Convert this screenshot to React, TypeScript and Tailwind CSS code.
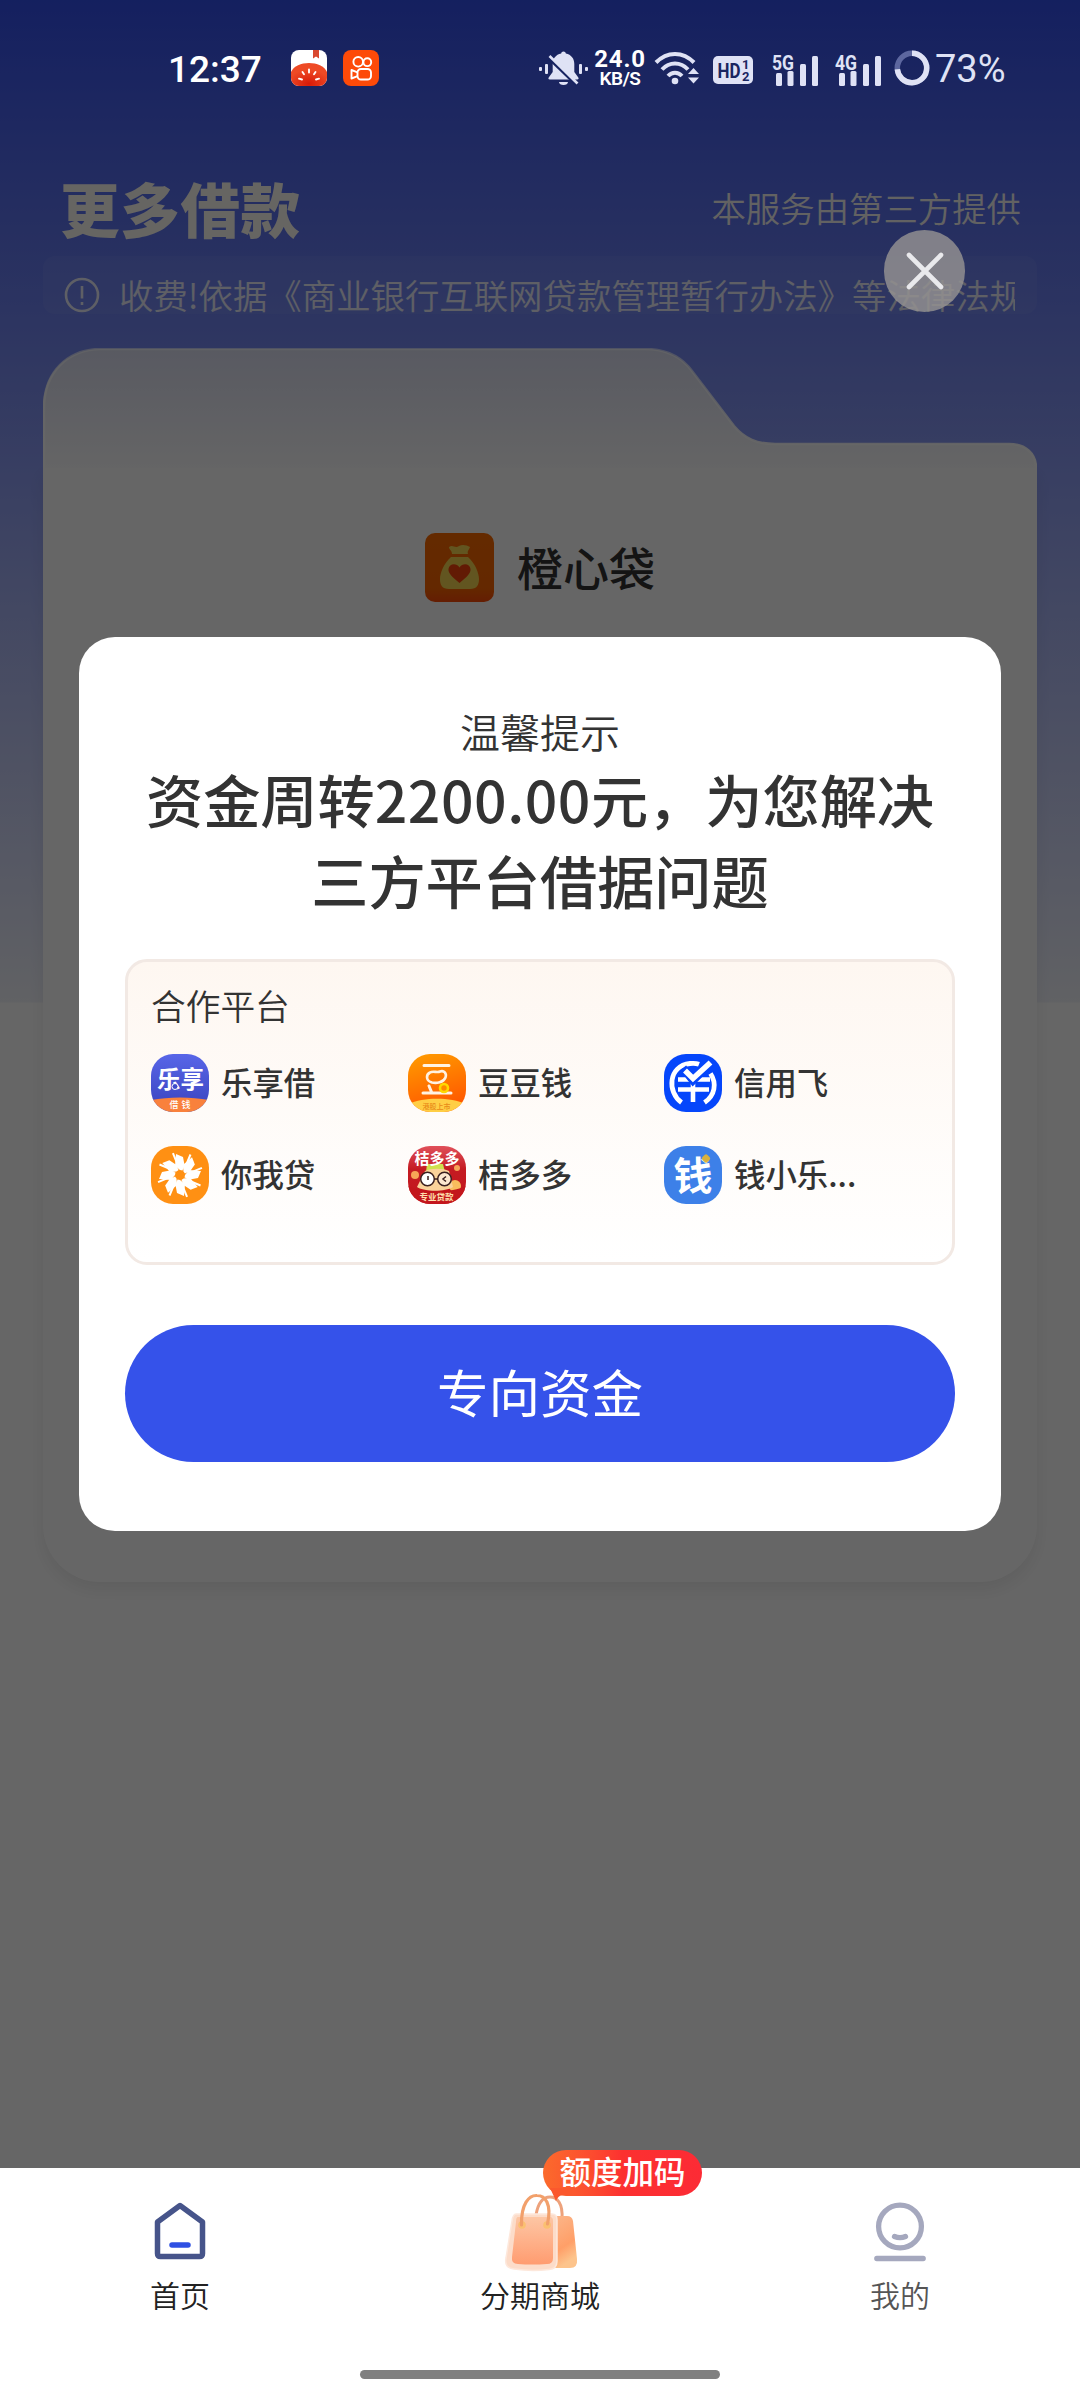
import { ReactNode } from "react";

const cjk = "font-['Noto_Sans_CJK_SC',sans-serif]";

const StatusBar = () => {
  return (
    <div className="relative z-20 h-[138px] shrink-0 pt-[46px] text-[#dfe2f5]">
      <div className="flex h-[44px] items-center">
        <span className="ml-[168px] w-[96px] pt-[3px] whitespace-nowrap font-['Roboto',sans-serif] text-[37px] leading-[44px] font-medium text-white">
          12:37
        </span>
        <svg className="ml-[27px] h-[36px] w-[36px]" viewBox="0 0 36 36">
          <defs>
            <clipPath id="book">
              <rect width="36" height="36" rx="8" />
            </clipPath>
            <radialGradient id="tomato" cx="50%" cy="90%" r="60%">
              <stop offset="0" stopColor="#d81a08" />
              <stop offset="1" stopColor="#ee4a25" />
            </radialGradient>
          </defs>
          <g clipPath="url(#book)">
            <rect width="36" height="36" fill="#fff" />
            <path d="M22 0h6v8.500l-3-2-3 2z" fill="#d9482f" />
            <path d="M0 22C5 10 31 10 36 22v14H0z" fill="url(#tomato)" />
            <path
              d="M18 19.500v3M11.500 22l1.500 2.200M24.500 22l-1.500 2.200M8 28.700l3 .8M28 28.700l-3 .8"
              stroke="#fff"
              strokeWidth="1.900"
              strokeLinecap="round"
            />
          </g>
        </svg>
        <svg
          className="ml-[16px] h-[36px] w-[36px]"
          viewBox="0 0 36 36"
          fill="none"
          stroke="#fff"
          strokeWidth="1.900"
        >
          <rect width="36" height="36" rx="8" fill="#fd4a08" stroke="none" />
          <circle cx="15.200" cy="11.800" r="4.800" />
          <circle cx="24.300" cy="12.200" r="3.900" />
          <rect x="14.500" y="19" width="13.500" height="10.500" rx="3.500" />
          <path d="M14.500 22.300l-6-2.300v8.500l6-2.300" strokeLinejoin="round" />
        </svg>

        <svg className="mt-[2px] ml-[160px] h-[36px] w-[50px]" viewBox="0 0 50 36" fill="currentColor">
          <rect x="0" y="16" width="3" height="4" rx="1" />
          <rect x="6" y="13" width="3" height="10" rx="1" />
          <rect x="40" y="13" width="3" height="10" rx="1" />
          <rect x="46" y="16" width="3" height="4" rx="1" />
          <path d="M24.500 0.500c1.500 0 2.300 1 2.300 2 5.500 1.200 8.500 5 8.500 10.500v8l4 5.500c.6 1 .2 2-1 2H10.700c-1.200 0-1.600-1-1-2l4-5.500v-8c0-5.500 3-9.300 8.500-10.500 0-1 .8-2 2.300-2z" />
          <path d="M20 31h9c0 1.700-2 3-4.500 3S20 32.700 20 31z" />
          <path d="M10 7.500l28 27" stroke="#172360" strokeWidth="3" />
          <path d="M10.500 5L38.500 32.500" stroke="currentColor" strokeWidth="2.600" />
        </svg>
        <div className="ml-[5px] flex w-[52px] flex-col items-center whitespace-nowrap font-['Roboto',sans-serif] text-white">
          <span className="text-[24px] leading-[22px] font-bold tracking-[0.800px]">24.0</span>
          <span className="text-[19px] leading-[18px] font-semibold tracking-[-0.500px]">KB/S</span>
        </div>
        <svg className="ml-[8px] h-[36px] w-[48px]" viewBox="0 0 48 36" fill="none">
          <g stroke="currentColor" strokeWidth="4">
            <path d="M2 12.500c11-11.500 27-11.500 38 0" />
            <path d="M8 19.500c7.500-8 18.500-8 26 0" />
            <path d="M14 26c4-4.300 10-4.300 14 0" />
          </g>
          <circle cx="21" cy="31" r="3.300" fill="currentColor" />
          <path d="M34 24l5.500-6 5.500 6zM34 27.500l5.500 6 5.500-6z" fill="currentColor" />
        </svg>
        <svg className="mt-[4px] ml-[11px] h-[28px] w-[40px]" viewBox="0 0 40 28" fontFamily="Roboto" fontWeight="700">
          <rect width="40" height="28" rx="5" fill="currentColor" />
          <g fill="#1a2560">
            <text x="4.500" y="21.500" fontSize="21" textLength="23" lengthAdjust="spacingAndGlyphs">
              HD
            </text>
            <text x="29" y="13" fontSize="13">
              1
            </text>
            <text x="29" y="25" fontSize="13">
              2
            </text>
          </g>
        </svg>
        <Signal name="5G" className="ml-[19px]" />
        <Signal name="4G" className="ml-[15px]" />
        <svg className="ml-[11px] h-[36px] w-[36px]" viewBox="0 0 36 36" fill="none" strokeWidth="5.500">
          <circle cx="18" cy="18" r="14.700" stroke="#5d679f" />
          <circle
            cx="18"
            cy="18"
            r="14.700"
            stroke="currentColor"
            strokeDasharray="67.400 92.400"
            transform="rotate(-90 18 18)"
          />
        </svg>
        <span className="ml-[5px] pt-[2px] whitespace-nowrap font-['Roboto',sans-serif] text-[38px] leading-[44px]">
          73%
        </span>
      </div>
    </div>
  );
};

const Signal = ({ name, className }: { name: string; className: string }) => (
  <svg className={`h-[42px] w-[48px] ${className}`} viewBox="0 -6 48 42" fill="currentColor">
    <text x="0" y="16.500" fontFamily="Roboto" fontWeight="700" fontSize="20" textLength="22" lengthAdjust="spacingAndGlyphs">
      {name}
    </text>
    <rect x="4" y="20" width="6" height="13" rx="1.500" />
    <rect x="15.500" y="18" width="6" height="15" rx="1.500" />
    <rect x="28" y="11" width="6" height="22" rx="1.500" />
    <rect x="40" y="3" width="6" height="30" rx="1.500" />
  </svg>
);

const FolderCard = () => {
  return (
    <div className="mx-[43px] mt-[34px]">
      <svg className="relative z-[1] block h-[120px] w-[994px]" viewBox="0 0 994 120">
        <defs>
          <linearGradient id="folder" x1="0" y1="0" x2="0" y2="1">
            <stop offset="0" stopColor="#dde0f3" />
            <stop offset="1" stopColor="#fdfdfe" />
          </linearGradient>
          <linearGradient id="edge" x1="0" y1="0" x2="0" y2="1">
            <stop offset="0" stopColor="#fff" stopOpacity="0.6" />
            <stop offset="1" stopColor="#fff" />
          </linearGradient>
        </defs>
        <path
          d="M0 120V60C0 24 25 1 58 1H602C622 1 638 8 649 23L691 78C702 91 714 96 732 96H966C983 96 994 106 994 123V120z"
          fill="url(#folder)"
        />
        <path
          d="M1 120V60C1 24 25 1 58 1H602C622 1 638 8 649 23L691 78C702 91 714 96 732 96H966C983 96 993 106 993 120"
          fill="none"
          stroke="url(#edge)"
          strokeWidth="2.500"
        />
      </svg>
      <div className="h-[1114px] rounded-b-[57px] bg-white pt-[65px] shadow-[0_8px_16px_rgba(0,0,0,0.07)]">
        <div className="flex h-[69px] items-center justify-center">
          <svg className="h-[69px] w-[69px]" viewBox="0 0 69 69">
            <defs>
              <linearGradient id="bagbg" x1="0" y1="0" x2="0" y2="1">
                <stop offset="0" stopColor="#fb6a00" />
                <stop offset="0.8" stopColor="#fb6400" />
                <stop offset="1" stopColor="#fb4a08" />
              </linearGradient>
            </defs>
            <rect width="69" height="69" rx="10" fill="url(#bagbg)" />
            <path
              d="M24 14c4-3 6 2 10-1 3-2 8-1 11 1-1 3-3 4-2 7H27c0-4-3-4-3-7zM26 24h17c7 6 11 16 11 22 0 6-2 10-9 10H24c-7 0-9-4-9-10 0-6 4-16 11-22z"
              fill="#f4d450"
            />
            <path
              d="M34.500 50C27 44 23 40 23.500 36c.5-5.500 8-6.500 11-1.500 3-5 10.500-4 11 1.500.5 4-3.500 8-11 14z"
              fill="#f5420a"
            />
          </svg>
          <span className="ml-[23px] pb-[4px] text-[46px] leading-[60px] font-medium text-[#333]">橙心袋</span>
        </div>
        <div className="mt-[32px] h-px bg-white" />
      </div>
    </div>
  );
};

const AppIcon = ({ id, children }: { id: string; children: ReactNode }) => (
  <svg className="h-[58px] w-[58px] shrink-0" viewBox="0 0 58 58">
    <defs>
      <clipPath id={id}>
        <rect width="58" height="58" rx="22" />
      </clipPath>
      <linearGradient id="lx" x1="0" y1="0" x2="0" y2="1">
        <stop offset="0" stopColor="#5866e8" />
        <stop offset="1" stopColor="#3942bd" />
      </linearGradient>
      <linearGradient id="dd" x1="0" y1="0" x2="0.3" y2="1">
        <stop offset="0" stopColor="#ff9d00" />
        <stop offset="1" stopColor="#ff5a00" />
      </linearGradient>
      <linearGradient id="jd" x1="0" y1="0" x2="0" y2="1">
        <stop offset="0" stopColor="#e0505a" />
        <stop offset="0.4" stopColor="#c41b22" />
        <stop offset="1" stopColor="#c3161c" />
      </linearGradient>
    </defs>
    <g clipPath={`url(#${id})`}>{children}</g>
  </svg>
);

const LogoText = (props: {
  x: number;
  y: number;
  size: number;
  fill: string;
  weight?: number;
  width?: number;
  children: string;
}) => (
  <text
    x={props.x}
    y={props.y}
    fontSize={props.size}
    fill={props.fill}
    fontWeight={props.weight || 700}
    fontFamily="Noto Sans CJK SC"
    textAnchor="middle"
    textLength={props.width}
  >
    {props.children}
  </text>
);

const platforms = [
  {
    name: "乐享借",
    icon: (
      <AppIcon id="c1">
        <rect width="58" height="58" fill="url(#lx)" />
        <path d="M0 46c18-3.500 40-3.500 58 0v12H0z" fill="#f9813c" />
        <LogoText x={29.500} y={34} size={23.500} fill="#fff">
          乐享
        </LogoText>
        <circle cx="24" cy="32.500" r="3" fill="#3f4bcb" stroke="#fff" strokeWidth="1" />
        <LogoText x={29} y={54} size={9} fill="#fff" weight={500} width={21}>
          借钱
        </LogoText>
      </AppIcon>
    ),
  },
  {
    name: "豆豆钱",
    icon: (
      <AppIcon id="c2">
        <rect width="58" height="58" fill="url(#dd)" />
        <path d="M0 50c16-7 42-7 58 0v8H0z" fill="#ffce45" />
        <path
          d="M16 11.500h25M15 39h28M21 32l2.500 6"
          stroke="#fff2e2"
          strokeWidth="3"
          strokeLinecap="round"
        />
        <path
          d="M22 18.500c3-2 7 .5 10-1 4-1.500 7 2 5.500 6-2 5-9 6-13.500 5-6-1.500-6.500-7.500-2-10z"
          fill="none"
          stroke="#fff2e2"
          strokeWidth="2.600"
        />
        <circle cx="36" cy="34" r="4" fill="#ff8a00" stroke="#ffd800" strokeWidth="2.600" />
        <LogoText x={28.500} y={54.500} size={7} fill="#e98a18" weight={500}>
          港股上市
        </LogoText>
      </AppIcon>
    ),
  },
  {
    name: "信用飞",
    icon: (
      <AppIcon id="c3">
        <rect width="58" height="58" fill="#0546fb" />
        <path
          d="M17.500 48.500C3 38 4 12 26 9.500c4-.5 7 0 9 .8M46.500 19.500c6.500 10 4.500 22-6 29"
          fill="none"
          stroke="#fff"
          strokeWidth="4.800"
        />
        <path d="M14 25.500h32M14 35.500h31M29 27v21" stroke="#fff" strokeWidth="4.600" />
        <path d="M19 14l10 12.500L46.500 9.500" fill="none" stroke="#0546fb" strokeWidth="8" />
        <path d="M21 16.500l8 8L46.500 8.500" fill="none" stroke="#fff" strokeWidth="5.500" />
      </AppIcon>
    ),
  },
  {
    name: "你我贷",
    icon: (
      <AppIcon id="c4">
        <rect width="58" height="58" fill="#ff9013" />
        {[0, 45, 90, 135, 180, 225, 270, 315].map((deg) => (
          <g key={deg} transform={`rotate(${deg} 29 29)`}>
            <path d="M29 24l-5-4 1-12 7 3 1.500 8-2 5.500z" fill="#fff" />
            <path d="M34.500 20.500l5-12" stroke="#fff" strokeWidth="2" />
          </g>
        ))}
      </AppIcon>
    ),
  },
  {
    name: "桔多多",
    icon: (
      <AppIcon id="c5">
        <rect width="58" height="58" fill="url(#jd)" />
        <circle cx="7" cy="29" r="4" fill="#f7a457" />
        <circle cx="49" cy="22" r="3" fill="#f7a457" />
        <circle cx="47" cy="40" r="6" fill="#f9bd5d" />
        <path d="M19 18h16l2 8H18z" fill="#cfe04f" />
        <path d="M17 25c6-3 18-3 24 0l4 16c-8 5-28 5-36 0z" fill="#fad29a" />
        <path d="M0 40c14 7 44 7 58 0v18H0z" fill="#c3161c" />
        <circle cx="19.500" cy="33" r="6.800" fill="#fff" stroke="#3a2020" strokeWidth="1.500" />
        <circle cx="36.500" cy="33" r="6.800" fill="#fde8d0" stroke="#3a2020" strokeWidth="1.500" />
        <path d="M26 33h4M38 30.500l-3 2.500 3 2.500M20 30v4" stroke="#3a2020" strokeWidth="1.500" fill="none" />
        <LogoText x={29} y={18} size={15} fill="#fff">
          桔多多
        </LogoText>
        <LogoText x={28.500} y={54} size={8.500} fill="#ffe1b0">
          专业贷款
        </LogoText>
      </AppIcon>
    ),
  },
  {
    name: "钱小乐...",
    icon: (
      <AppIcon id="c6">
        <rect width="58" height="58" fill="#3d80e8" />
        <LogoText x={29} y={43.500} size={39} weight={700} fill="#fff">
          钱
        </LogoText>
        <rect x="38.500" y="9" width="7" height="7" rx="2" fill="#d9b13d" transform="rotate(45 42 12.500)" />
      </AppIcon>
    ),
  },
];

const Dialog = () => {
  return (
    <div className="absolute inset-x-0 top-0 z-10 flex h-[2168px] flex-col items-center bg-black/60">
      <button className="mt-[230px] ml-[769px] flex h-[82px] w-[81px] items-center justify-center rounded-full bg-[#959392]/82">
        <svg className="h-[40px] w-[40px]" viewBox="0 0 40 40">
          <path d="M4 4l32 32M36 4L4 36" stroke="#e9e9ec" strokeWidth="4.600" strokeLinecap="round" />
        </svg>
      </button>
      <div className="mt-[325px] flex h-[894px] w-[922px] flex-col rounded-[36px] bg-white px-[46px] pt-[67px] text-center text-[#333]">
        <p className="text-[40px] leading-[54px] font-[350]">温馨提示</p>
        <h2 className="text-[57.200px] leading-[81px] font-medium whitespace-nowrap">
          资金周转<span className="tracking-[0.500px]">2200.00</span>元，为您解决
          <br />
          三方平台借据问题
        </h2>
        <div className="mt-[39px] h-[306px] shrink-0 rounded-[22px] border-[3px] border-[#f2e9e4] bg-linear-to-b from-[#fef7f1] to-white pt-[19px] pl-[23px] text-left">
          <p className="text-[34.700px] leading-[48px] font-[350]">合作平台</p>
          <div className="mt-[25px] grid grid-cols-[257px_256px_256px] gap-y-[34px]">
            {platforms.map((item) => (
              <div key={item.name} className="flex items-center gap-[12px]">
                {item.icon}
                <span className="pb-[3px] text-[31.400px] leading-[44px] font-medium whitespace-nowrap">
                  {item.name}
                </span>
              </div>
            ))}
          </div>
        </div>
        <button className="mt-[60px] h-[137px] shrink-0 rounded-full bg-[#3552ea] pb-[6px] text-[51.500px] leading-[60px] text-white">
          专向资金
        </button>
      </div>
    </div>
  );
};

const TabBar = () => {
  return (
    <div className="relative z-20 mt-auto flex h-[232px] shrink-0 flex-col items-center justify-between bg-white pt-[20px] pb-[21px] text-[30px] leading-[44px] font-[350] text-[#222]">
      <div className="grid w-full grid-cols-3">
        <div className="flex flex-col items-center">
          <svg className="h-[84px] w-[60px]" viewBox="0 0 60 84" fill="none" strokeLinejoin="round" strokeLinecap="round">
            <path d="M30 17.500L52.500 34v31.500q0 3-3 3h-39q-3 0-3-3V34z" stroke="#46548a" strokeWidth="5.500" />
            <path d="M22 57h16" stroke="#2f50e3" strokeWidth="5.500" />
          </svg>
          <span>首页</span>
        </div>
        <div className="relative flex flex-col items-center">
          <ShoppingBag />
          <span>分期商城</span>
          <div className="absolute -top-[38px] left-[183px] h-[46px] w-[159px] rounded-[23px] bg-linear-to-r from-[#fb6a2c] via-[#fc3030] to-[#fc2b35] text-center text-[31.500px] leading-[41px] font-medium text-white">
            额度加码
            <svg className="absolute top-[38px] left-[7px] h-[14px] w-[22px]" viewBox="0 0 22 14">
              <path d="M0 0l6 13q2-5 6-6h10V0z" fill="#fb582d" />
            </svg>
          </div>
        </div>
        <div className="flex flex-col items-center text-[#555]">
          <svg
            className="h-[84px] w-[60px]"
            viewBox="0 0 60 84"
            fill="none"
            stroke="#a5a8be"
            strokeWidth="5.300"
            strokeLinecap="round"
          >
            <circle cx="30" cy="38.500" r="21.400" />
            <path d="M24.500 48.500q5.500 2.400 11 0M6.800 70.500h46.400" />
          </svg>
          <span>我的</span>
        </div>
      </div>
      <div className="h-[9px] w-[360px] rounded-full bg-[#808080]" />
    </div>
  );
};

const ShoppingBag = () => (
  <svg className="h-[84px] w-[80px]" viewBox="1 6 80 84" fill="none">
    <defs>
      <linearGradient id="front" x1="0" y1="0" x2="0" y2="1">
        <stop offset="0" stopColor="#fdc6a4" />
        <stop offset="1" stopColor="#ff9c70" />
      </linearGradient>
      <linearGradient id="back" x1="0" y1="0" x2="0.4" y2="1">
        <stop offset="0" stopColor="#fbb98e" />
        <stop offset="0.7" stopColor="#ff9f68" />
        <stop offset="1" stopColor="#fdc48c" />
      </linearGradient>
    </defs>
    <path d="M37 33c2-12 7-18 14-18s13 6 12 22" stroke="#eda27c" strokeWidth="3" />
    <path d="M50 34h18q5 0 6 5l4 38q1 9-7 9H48z" fill="url(#back)" />
    <path
      d="M17 32h36q5 0 5 6v41q0 8-8 8.500-18 2-35-.5-10-1-8-11l6-37q1-7 4-7z"
      fill="#fcdcc9"
      stroke="#fde8dc"
      strokeWidth="1.500"
    />
    <path d="M19 35h32q3 0 3 4v37q0 6-6 6-15 1-29 0-7 0-6-7l4-35q0-5 2-5z" fill="url(#front)" />
    <circle cx="23" cy="43" r="3.800" fill="#fbc071" />
    <circle cx="48" cy="43" r="3.800" fill="#fbc071" />
    <path d="M22.500 43C22 22 30 13 38 13.500c8 0 15 8 10.500 28.500" stroke="#f2a06b" strokeWidth="3.200" strokeLinecap="round" />
  </svg>
);

const App = () => {
  return (
    <div className={`relative flex h-[2400px] w-[1080px] flex-col overflow-hidden bg-white ${cjk}`}>
      <div className="flex h-[2168px] flex-col bg-[linear-gradient(180deg,#3450ee_0px,#f2f4fb_1002px,#ffffff_1003px)]">
        <StatusBar />
        <div className="flex h-[118px] shrink-0 items-center justify-between pt-[19px] pr-[59px] pl-[60px] text-[#fffcf6]">
          <h1 className="text-[59.500px] leading-[80px] font-black tracking-[0.700px]">更多借款</h1>
          <span className="text-[34.400px] leading-[48px] font-[350] opacity-95">本服务由第三方提供</span>
        </div>
        <div className="mx-[43px] flex h-[58px] shrink-0 items-start rounded-[12px] bg-white/5 pt-[13px] text-white/85">
          <svg className="mt-[8px] ml-[21px] h-[36px] w-[36px]" viewBox="0 0 36 36" fill="none" stroke="currentColor" strokeWidth="2.600">
            <circle cx="18" cy="18" r="16" />
            <path d="M18 9v12.500M18 25v3" />
          </svg>
          <p className="ml-[19px] w-[896px] overflow-hidden text-[34.400px] leading-[50px] font-[350] whitespace-nowrap">
            收费!依据《商业银行互联网贷款管理暂行办法》等法律法规
          </p>
        </div>
        <FolderCard />
      </div>
      <Dialog />
      <TabBar />
    </div>
  );
};

export default App;
